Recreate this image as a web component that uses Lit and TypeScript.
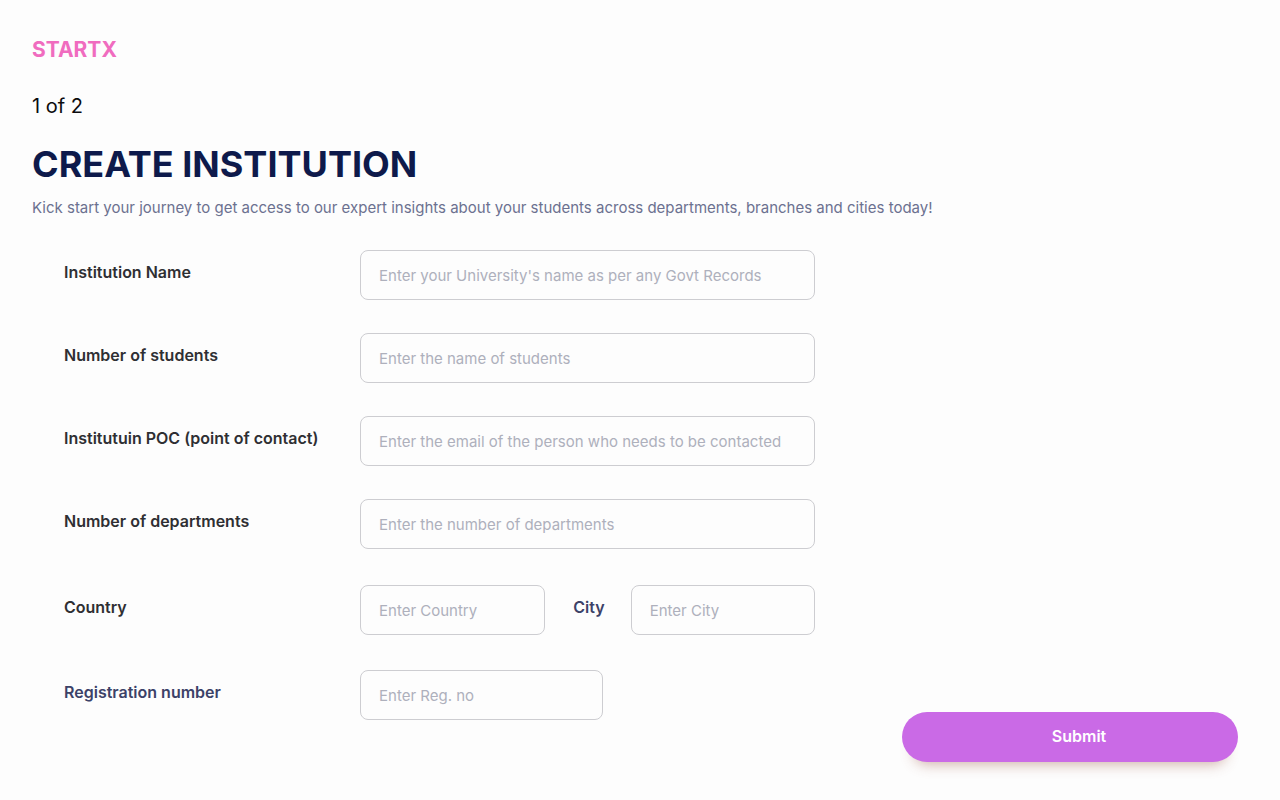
import { LitElement, html, css } from "lit";
import { customElement } from "lit/decorators.js";

@customElement("app-root")
export class AppRoot extends LitElement {
  static styles = css`
    :host {
      display: block;
      box-sizing: border-box;
      min-height: 100vh;
      padding: 36px 42px 36px 32px;
      background: #fdfdfd;
      color: #2f2f33;
      font-family: Inter, "Liberation Sans", sans-serif;
      font-size: 16px;
      line-height: 24px;
    }
    *, *::before, *::after { box-sizing: border-box; }
    .brand {
      display: block;
      width: max-content;
      color: #f06cbf;
      font-size: 21px;
      line-height: 28px;
      font-weight: 700;
      text-decoration: none;
    }
    .step {
      margin: 28px 0 0;
      color: #0c0c0e;
      font-size: 20px;
      line-height: 28px;
    }
    h1 {
      margin: 20px 0 0;
      color: #0e1a4b;
      font-size: 36px;
      line-height: 48px;
      font-weight: 700;
    }
    .intro {
      margin: 8px 0 0;
      color: #6c7190;
      font-size: 15px;
      font-weight: 400;
    }
    form {
      display: grid;
      grid-template-columns: minmax(0, 783px) minmax(200px, 336px);
      justify-content: space-between;
      align-items: end;
      margin-top: 30px;
    }
    .fields {
      display: grid;
      gap: 36px;
      padding: 0 0 42px 32px;
    }
    .group { display: grid; gap: 33px; }
    .group.wide { gap: 35px; }
    .row {
      display: grid;
      grid-template-columns: 296px minmax(0, 1fr);
      align-items: center;
    }
    label { padding-bottom: 6px; font-weight: 600; }
    .accent { color: #3c4268; }
    input {
      width: 100%;
      min-width: 0;
      height: 50px;
      padding: 0 18px;
      border: 1px solid #cdcdd1;
      border-radius: 8px;
      background: transparent;
      color: #2f2f33;
      font: inherit;
      font-size: 15px;
    }
    input::placeholder { color: #aeb0bc; opacity: 1; }
    .pair {
      display: grid;
      grid-template-columns: 185fr auto 184fr;
      align-items: center;
    }
    .pair label { padding-left: 28px; padding-right: 26px; }
    .short { max-width: 243px; }
    button {
      height: 50px;
      padding: 0 0 2px 18px;
      border: 0;
      border-radius: 25px;
      background: #ca6ae6;
      box-shadow: 0 14px 14px -12px rgba(150, 80, 60, 0.45);
      color: #fff;
      font: inherit;
      font-weight: 600;
      cursor: pointer;
    }
  `;

  private field(id: string, label: string, hint: string) {
    return html`<div class="row">
      <label for=${id}>${label}</label>
      <input id=${id} name=${id} type="text" placeholder=${hint} />
    </div>`;
  }

  render() {
    return html`
      <header><a class="brand" href="#">STARTX</a></header>
      <main>
        <p class="step">1 of 2</p>
        <h1>CREATE INSTITUTION</h1>
        <p class="intro">Kick start your journey to get access to our expert insights about your students across departments, branches and cities today!</p>
        <form @submit=${(e: Event) => e.preventDefault()}>
          <div class="fields">
            <div class="group">
              ${this.field("name", "Institution Name", "Enter your University's name as per any Govt Records")}
              ${this.field("students", "Number of students", "Enter the name of students")}
              ${this.field("contact", "Institutuin POC (point of contact)", "Enter the email of the person who needs to be contacted")}
              ${this.field("departments", "Number of departments", "Enter the number of departments")}
            </div>
            <div class="group wide">
              <div class="row">
                <label for="country">Country</label>
                <div class="pair">
                  <input id="country" name="country" type="text" placeholder="Enter Country" />
                  <label class="accent" for="city">City</label>
                  <input id="city" name="city" type="text" placeholder="Enter City" />
                </div>
              </div>
              <div class="row">
                <label class="accent" for="registration">Registration number</label>
                <input class="short" id="registration" name="registration" type="text" placeholder="Enter Reg. no" />
              </div>
            </div>
          </div>
          <button type="submit">Submit</button>
        </form>
      </main>
    `;
  }
}
